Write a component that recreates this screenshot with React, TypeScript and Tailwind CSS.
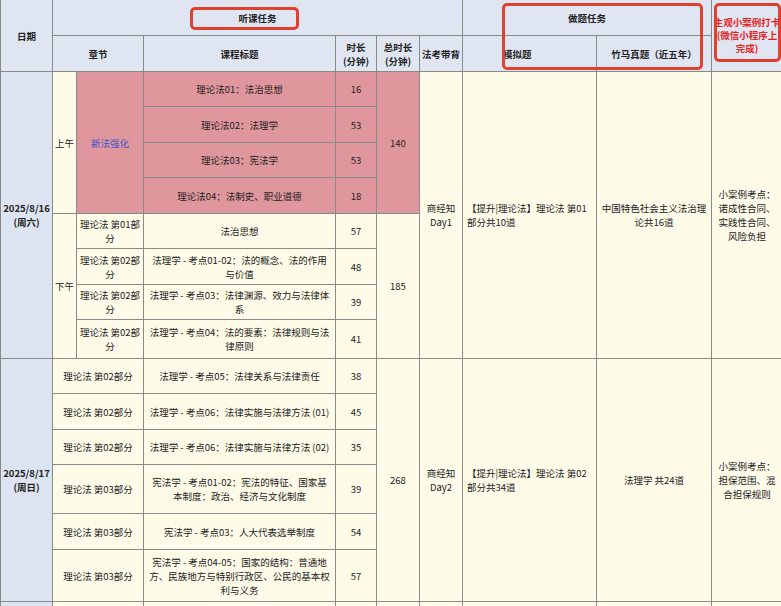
import React from "react";

const B = "border-r border-b border-[#8a8a8a] flex items-center justify-center text-center leading-[14px]";
const HDR = "bg-[#dfe6f2] font-bold";
const CR = "bg-[#fefbe8]";
const PK = "bg-[#e0969d]";

function C({ c, r, cs = 1, rs = 1, cls = "", children }: { c: number; r: number; cs?: number; rs?: number; cls?: string; children?: React.ReactNode }) {
  return (
    <div className={`${B} ${cls}`} style={{ gridColumn: `${c} / span ${cs}`, gridRow: `${r} / span ${rs}` }}>
      {children}
    </div>
  );
}

export default function App() {
  const d1m = [["理论法01：法治思想", "16"], ["理论法02：法理学", "53"], ["理论法03：宪法学", "53"], ["理论法04：法制史、职业道德", "18"]];
  const d1a = [["理论法 第01部分", "法治思想", "57"], ["理论法 第02部分", "法理学 - 考点01-02：法的概念、法的作用与价值", "48"], ["理论法 第02部分", "法理学 - 考点03：法律渊源、效力与法律体系", "39"], ["理论法 第02部分", "法理学 - 考点04：法的要素：法律规则与法律原则", "41"]];
  const d2 = [["理论法 第02部分", "法理学 - 考点05：法律关系与法律责任", "38"], ["理论法 第02部分", "法理学 - 考点06：法律实施与法律方法 (01)", "45"], ["理论法 第02部分", "法理学 - 考点06：法律实施与法律方法 (02)", "35"], ["理论法 第03部分", "宪法学 - 考点01-02：宪法的特征、国家基本制度：政治、经济与文化制度", "39"], ["理论法 第03部分", "宪法学 - 考点03：人大代表选举制度", "54"], ["理论法 第03部分", "宪法学 - 考点04-05：国家的结构：普通地方、民族地方与特别行政区、公民的基本权利与义务", "57"]];
  return (
    <div className="relative w-[781px] h-[606px] overflow-hidden bg-white text-[9.5px] text-[#222]" style={{ fontFamily: '"Noto Sans CJK SC", "Noto Sans", sans-serif' }}>
      <div
        className="grid border-l border-t border-[#8a8a8a] w-[782px] -mt-px"
        style={{
          gridTemplateColumns: "52px 24px 67px 192px 41px 43px 43px 134px 115px 71px",
          gridTemplateRows: "36px 36px 35px 36px 35px 36px 35px 36px 35px 39px 35px 36px 35px 49px 36px 52px 20px",
        }}
      >
        <C c={1} r={1} rs={2} cls={HDR}>日期</C>
        <C c={2} r={1} cs={6} cls={HDR}>听课任务</C>
        <C c={8} r={1} cs={2} cls={HDR}>做题任务</C>
        <C c={10} r={1} rs={2} cls={`${HDR} text-[#e8231f] !leading-[13px]`}>主观小案例打卡(微信小程序上完成)</C>
        <C c={2} r={2} cs={2} cls={HDR}>章节</C>
        <C c={4} r={2} cls={HDR}>课程标题</C>
        <C c={5} r={2} cls={HDR}><span>时长<br />(分钟)</span></C>
        <C c={6} r={2} cls={HDR}><span>总时长<br />(分钟)</span></C>
        <C c={7} r={2} cls={HDR}>法考带背</C>
        <C c={8} r={2} cls={`${HDR} !justify-start pl-[40px]`}>模拟题</C>
        <C c={9} r={2} cls={HDR}>竹马真题（近五年）</C>

        <C c={1} r={3} rs={8} cls={`bg-[#dce4f1] font-bold`}><span>2025/8/16<br />(周六)</span></C>
        <C c={2} r={3} rs={4} cls={CR}>上午</C>
        <C c={3} r={3} rs={4} cls={`${PK} text-[#3b55c8]`}>新法强化</C>
        {d1m.map((x, i) => (
          <React.Fragment key={i}>
            <C c={4} r={3 + i} cls={PK}>{x[0]}</C>
            <C c={5} r={3 + i} cls={PK}>{x[1]}</C>
          </React.Fragment>
        ))}
        <C c={6} r={3} rs={4} cls={PK}>140</C>
        <C c={2} r={7} rs={4} cls={CR}>下午</C>
        {d1a.map((x, i) => (
          <React.Fragment key={i}>
            <C c={3} r={7 + i} cls={CR}>{x[0]}</C>
            <C c={4} r={7 + i} cls={`${CR} px-1`}>{x[1]}</C>
            <C c={5} r={7 + i} cls={CR}>{x[2]}</C>
          </React.Fragment>
        ))}
        <C c={6} r={7} rs={4} cls={CR}>185</C>
        <C c={7} r={3} rs={8} cls={CR}><span>商经知<br />Day1</span></C>
        <C c={8} r={3} rs={8} cls={`${CR} !justify-start !text-left px-1`}>【提升|理论法】理论法 第01部分共10道</C>
        <C c={9} r={3} rs={8} cls={`${CR} px-1`}>中国特色社会主义法治理论共16道</C>
        <C c={10} r={3} rs={8} cls={`${CR} px-1`}>小案例考点：诺成性合同、实践性合同、风险负担</C>

        <C c={1} r={11} rs={6} cls={`bg-[#dce4f1] font-bold`}><span>2025/8/17<br />(周日)</span></C>
        {d2.map((x, i) => (
          <React.Fragment key={i}>
            <C c={2} r={11 + i} cs={2} cls={CR}>{x[0]}</C>
            <C c={4} r={11 + i} cls={`${CR} px-1`}>{x[1]}</C>
            <C c={5} r={11 + i} cls={CR}>{x[2]}</C>
          </React.Fragment>
        ))}
        <C c={6} r={11} rs={6} cls={CR}>268</C>
        <C c={7} r={11} rs={6} cls={CR}><span>商经知<br />Day2</span></C>
        <C c={8} r={11} rs={6} cls={`${CR} !justify-start !text-left px-1`}>【提升|理论法】理论法 第02部分共34道</C>
        <C c={9} r={11} rs={6} cls={CR}>法理学 共24道</C>
        <C c={10} r={11} rs={6} cls={`${CR} px-1`}>小案例考点：担保范围、混合担保规则</C>

        <C c={1} r={17} cls="bg-[#dce4f1]" />
        <C c={2} r={17} cs={2} cls={CR} />
        <C c={4} r={17} cls={CR} />
        <C c={5} r={17} cls={CR} />
        <C c={6} r={17} cls={CR} />
        <C c={7} r={17} cls={CR} />
        <C c={8} r={17} cls={CR} />
        <C c={9} r={17} cls={CR} />
        <C c={10} r={17} cls={CR} />
      </div>
      <div className="absolute left-[190px] top-[7px] w-[109px] h-[23px] border-[3px] border-[#e0412f] rounded-[5px]" />
      <div className="absolute left-[502px] top-[3px] w-[201px] h-[67px] border-[3px] border-[#e0412f] rounded-[5px]" />
      <div className="absolute left-[714px] top-[3px] w-[67px] h-[59px] border-[3px] border-[#e0412f] rounded-[5px]" />
    </div>
  );
}
